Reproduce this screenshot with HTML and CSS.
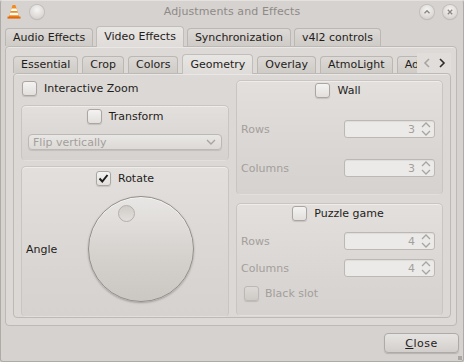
FILE: index.html
```html
<!DOCTYPE html>
<html lang="en">
<head>
  <meta charset="UTF-8" />
  <title>Adjustments and Effects</title>
  <link rel="stylesheet" href="styles.css">
</head>
<body>
  <div class="window">
    <div class="titlebar">
      <div class="tb-left">
        <svg class="cone" width="14" height="15" viewBox="0 0 14 15">
          <path d="M5.6 1h2.8l3.8 12H1.8z" fill="#f38b17"/>
          <path d="M4.6 4.6h4.8l.8 2.4H3.8z" fill="#fff"/>
          <path d="M3.3 8.8h7.4l.8 2.4H2.5z" fill="#fff"/>
          <path d="M0.5 12.6h13v2H0.5z" fill="#e0690c"/>
        </svg>
        <span class="tb-btn"></span>
      </div>
      <div class="title">Adjustments and Effects</div>
      <div class="tb-right">
        <span class="tb-btn">
          <svg width="14" height="14" viewBox="0 0 14 14"><path d="M4.5 8.2L7 5.7l2.5 2.5" fill="none" stroke="#8a8682" stroke-width="1.3"/></svg>
        </span>
        <span class="tb-btn">
          <svg width="14" height="14" viewBox="0 0 14 14"><path d="M4.8 4.8l4.4 4.4M9.2 4.8l-4.4 4.4" fill="none" stroke="#8a8682" stroke-width="1.3"/></svg>
        </span>
      </div>
    </div>

    <div class="main">
      <div class="tabbar outer-tabs">
        <div class="tab">Audio Effects</div>
        <div class="tab active">Video Effects</div>
        <div class="tab">Synchronization</div>
        <div class="tab">v4l2 controls</div>
      </div>
      <div class="pane outer-pane">
        <div class="tabbar inner-tabs">
          <div class="tab">Essential</div>
          <div class="tab">Crop</div>
          <div class="tab">Colors</div>
          <div class="tab active">Geometry</div>
          <div class="tab">Overlay</div>
          <div class="tab">AtmoLight</div>
          <div class="tab clipped">Adv</div>
          <div class="scroll-arrows">
            <svg width="10" height="12" viewBox="0 0 10 12"><path d="M7 2L3 6l4 4" fill="none" stroke="#a8a4a0" stroke-width="1.6"/></svg>
            <svg width="10" height="12" viewBox="0 0 10 12"><path d="M3 2l4 4-4 4" fill="none" stroke="#2e2c2a" stroke-width="1.6"/></svg>
          </div>
        </div>
        <div class="pane inner-pane">
          <div class="col col-left">
            <label class="check-row zoom-row"><span class="check"></span>Interactive Zoom</label>

            <div class="group transform-box">
              <label class="check-row centered"><span class="check"></span>Transform</label>
              <div class="combo">
                <span>Flip vertically</span>
                <svg width="10" height="8" viewBox="0 0 10 8"><path d="M1 2l4 4 4-4" fill="none" stroke="#a8a4a0" stroke-width="1.4"/></svg>
              </div>
            </div>

            <div class="group rotate-box">
              <label class="check-row centered">
                <span class="check">
                  <svg width="15" height="15" viewBox="0 0 15 15"><path d="M3.5 7.5l2.8 3 5.2-6.5" fill="none" stroke="#1e1c1a" stroke-width="2"/></svg>
                </span>Rotate
              </label>
              <div class="dial-row">
                <span class="angle-label">Angle</span>
                <div class="dial"><span class="dimple"></span></div>
              </div>
            </div>
          </div>

          <div class="col col-right">
            <div class="group wall-box">
              <label class="check-row centered"><span class="check"></span>Wall</label>
              <div class="field-row wall-rows">
                <span class="disabled">Rows</span>
                <div class="spin"><span>3</span><svg width="10" height="14" viewBox="0 0 10 14"><path d="M1 5l4-4 4 4M1 9l4 4 4-4" fill="none" stroke="#a8a4a0" stroke-width="1.3"/></svg></div>
              </div>
              <div class="field-row wall-cols">
                <span class="disabled">Columns</span>
                <div class="spin"><span>3</span><svg width="10" height="14" viewBox="0 0 10 14"><path d="M1 5l4-4 4 4M1 9l4 4 4-4" fill="none" stroke="#a8a4a0" stroke-width="1.3"/></svg></div>
              </div>
            </div>

            <div class="group puzzle-box">
              <label class="check-row centered"><span class="check"></span>Puzzle game</label>
              <div class="field-row puzzle-rows">
                <span class="disabled">Rows</span>
                <div class="spin"><span>4</span><svg width="10" height="14" viewBox="0 0 10 14"><path d="M1 5l4-4 4 4M1 9l4 4 4-4" fill="none" stroke="#a8a4a0" stroke-width="1.3"/></svg></div>
              </div>
              <div class="field-row puzzle-cols">
                <span class="disabled">Columns</span>
                <div class="spin"><span>4</span><svg width="10" height="14" viewBox="0 0 10 14"><path d="M1 5l4-4 4 4M1 9l4 4 4-4" fill="none" stroke="#a8a4a0" stroke-width="1.3"/></svg></div>
              </div>
              <label class="check-row black-slot disabled"><span class="check dim"></span>Black slot</label>
            </div>
          </div>
        </div>
      </div>
    </div>

    <div class="footer">
      <button class="close-btn"><u>C</u>lose</button>
    </div>
    <span class="grip"></span>
  </div>
</body>
</html>
```

FILE: styles.css
```css
html, body {
  margin: 0;
  padding: 0;
  width: 464px;
  height: 362px;
  overflow: hidden;
  font-family: 'DejaVu Sans', sans-serif;
  font-size: 11px;
  color: #1f1d1b;
  background: #d6d2d0;
}
.window {
  position: relative;
  box-sizing: border-box;
  width: 464px;
  height: 362px;
  background: #d6d2d0;
  border: 1px solid #aeaaa6;
  border-top-color: #e4e1de;
  border-radius: 3px;
  display: flex;
  flex-direction: column;
}

/* title bar */
.titlebar {
  height: 21px;
  display: grid;
  grid-template-columns: 1fr auto 1fr;
  align-items: center;
}
.tb-left {
  display: flex;
  align-items: center;
  gap: 9px;
  padding-left: 6px;
}
.tb-right {
  display: flex;
  justify-content: flex-end;
  gap: 9px;
  padding-right: 6px;
}
.title {
  color: #8e8a86;
  font-size: 11px;
  letter-spacing: 0.1px;
}
.tb-btn {
  width: 14px;
  height: 14px;
  border-radius: 50%;
  background: radial-gradient(circle at 50% 35%, #f6f5f4 0%, #dedbd8 60%, #c9c5c1 100%);
  box-shadow: 0 0 0 1px #c2beba, 0 1px 1px rgba(0,0,0,0.15);
  display: flex;
}

/* tabs */
.main {
  padding: 4px 6px 0 4px;
}
.tabbar {
  display: flex;
  align-items: flex-end;
  gap: 3px;
  position: relative;
  z-index: 2;
}
.tab {
  height: 17px;
  line-height: 17px;
  padding: 0 7px;
  border: 1px solid #bbb7b3;
  border-bottom: none;
  border-radius: 4px 4px 0 0;
  background: linear-gradient(#dcd9d6, #cfcbc7);
  white-space: nowrap;
}
.tab.active {
  height: 20px;
  line-height: 19px;
  background: linear-gradient(#e8e6e4, #dedbd8);
  border-color: #c1bdb9;
  margin-bottom: -1px;
}
.pane {
  border: 1px solid #bdb9b5;
  border-radius: 4px;
  background: #dcd9d6;
  box-shadow: inset 0 1px 0 #eae8e6;
}
.outer-pane {
  height: 280px;
  box-sizing: border-box;
  padding: 7px 5px 0 7px;
}
.inner-tabs {
  gap: 4px;
}
.inner-tabs .tab {
  height: 16px;
  line-height: 16px;
}
.inner-tabs .tab.active {
  height: 19px;
  line-height: 19px;
}
.inner-tabs .tab.clipped {
  padding-right: 20px;
}
.scroll-arrows {
  position: absolute;
  right: 0;
  top: -1px;
  width: 34px;
  height: 20px;
  background: #e0ddda;
  display: flex;
  align-items: center;
  justify-content: space-between;
  padding: 0 4px 0 5px;
  box-sizing: border-box;
}
.inner-pane {
  height: 245px;
  box-sizing: border-box;
  padding: 6px 7px 0 7px;
  display: flex;
  gap: 7px;
  background: #dbd8d5;
}

/* columns */
.col {
  display: flex;
  flex-direction: column;
}
.col-left {
  width: 208px;
}
.col-right {
  width: 207px;
  gap: 8px;
}
.check-row {
  display: flex;
  align-items: center;
  gap: 7px;
  height: 16px;
}
.check-row.centered {
  justify-content: center;
}
.zoom-row {
  padding-left: 1px;
  margin-bottom: 9px;
}
.check {
  width: 15px;
  height: 15px;
  box-sizing: border-box;
  border: 1px solid #aaa6a2;
  border-radius: 3px;
  background: linear-gradient(#f4f3f2, #e2dfdc);
  box-shadow: 0 1px 1px rgba(0,0,0,0.12);
  display: flex;
  align-items: center;
  justify-content: center;
}
.check svg {
  margin: -1px;
}
.check.dim {
  background: linear-gradient(#dcd9d6, #cecac6);
  border-color: #bcb8b4;
}
.disabled {
  color: #a39f9b;
}

/* group boxes */
.group {
  box-sizing: border-box;
  border: 1px solid #c9c5c1;
  border-bottom-color: transparent;
  border-radius: 5px;
  background: linear-gradient(#e2dfdc, #d9d5d2 70%, #d6d2d0);
  box-shadow: inset 0 1px 0 #efedeb;
  display: flex;
  flex-direction: column;
}
.transform-box {
  height: 56px;
  padding: 2px 6px 0 6px;
}
.combo {
  margin-top: 10px;
  height: 16px;
  box-sizing: border-box;
  border: 1px solid #bcb8b4;
  border-radius: 4px;
  background: linear-gradient(#e9e7e5, #dcd9d6);
  box-shadow: 0 1px 1px rgba(0,0,0,0.1);
  display: flex;
  align-items: center;
  justify-content: space-between;
  padding: 0 5px 0 4px;
  color: #a39f9b;
}
.rotate-box {
  margin-top: 5px;
  height: 151px;
  padding-top: 3px;
}
.dial-row {
  display: flex;
  align-items: center;
  padding: 10px 0 0 4px;
}
.angle-label {
  width: 62px;
}
.dial {
  position: relative;
  width: 106px;
  height: 106px;
  box-sizing: border-box;
  border-radius: 50%;
  border: 1px solid #928e8a;
  background: linear-gradient(#e8e6e4, #d4d0cc 60%, #cbc7c3);
  box-shadow: 0 1px 2px rgba(0,0,0,0.25), inset 0 1px 0 #f4f3f2;
}
.dimple {
  position: absolute;
  left: 29px;
  top: 8px;
  width: 17px;
  height: 17px;
  box-sizing: border-box;
  border-radius: 50%;
  border: 1px solid #b3afab;
  background: linear-gradient(#d0ccc8, #e2dfdc);
}

.wall-box {
  height: 115px;
  padding: 1px 7px 0 4px;
}
.puzzle-box {
  height: 113px;
  padding: 1px 7px 0 4px;
}
.field-row {
  display: flex;
  align-items: center;
  justify-content: space-between;
}
.wall-rows { margin-top: 22px; }
.wall-cols { margin-top: 21px; }
.puzzle-rows { margin-top: 11px; }
.puzzle-cols { margin-top: 9px; }
.spin {
  width: 91px;
  height: 18px;
  box-sizing: border-box;
  border: 1px solid #bcb8b4;
  border-radius: 3px;
  background: #eceae8;
  box-shadow: inset 0 1px 1px rgba(0,0,0,0.06);
  display: flex;
  align-items: center;
  justify-content: flex-end;
  gap: 6px;
  padding-right: 3px;
  color: #a39f9b;
}
.black-slot {
  margin-top: 8px;
  padding-left: 3px;
  gap: 6px;
}

/* footer */
.footer {
  display: flex;
  justify-content: flex-end;
  padding: 7px 4px 0 0;
}
.close-btn {
  width: 75px;
  height: 20px;
  font-family: 'DejaVu Sans', sans-serif;
  font-size: 11px;
  color: #1f1d1b;
  border: 1px solid #aeaaa6;
  border-radius: 4px;
  background: linear-gradient(#e6e4e2, #d2cecb);
  box-shadow: 0 1px 1px rgba(0,0,0,0.15);
  padding: 0;
  letter-spacing: 0.5px;
}
.grip {
  position: absolute;
  right: 1px;
  bottom: 1px;
  width: 4px;
  height: 4px;
  background: radial-gradient(circle, #9a9692 0.6px, transparent 1px) 0 0 / 2px 2px;
}
```
